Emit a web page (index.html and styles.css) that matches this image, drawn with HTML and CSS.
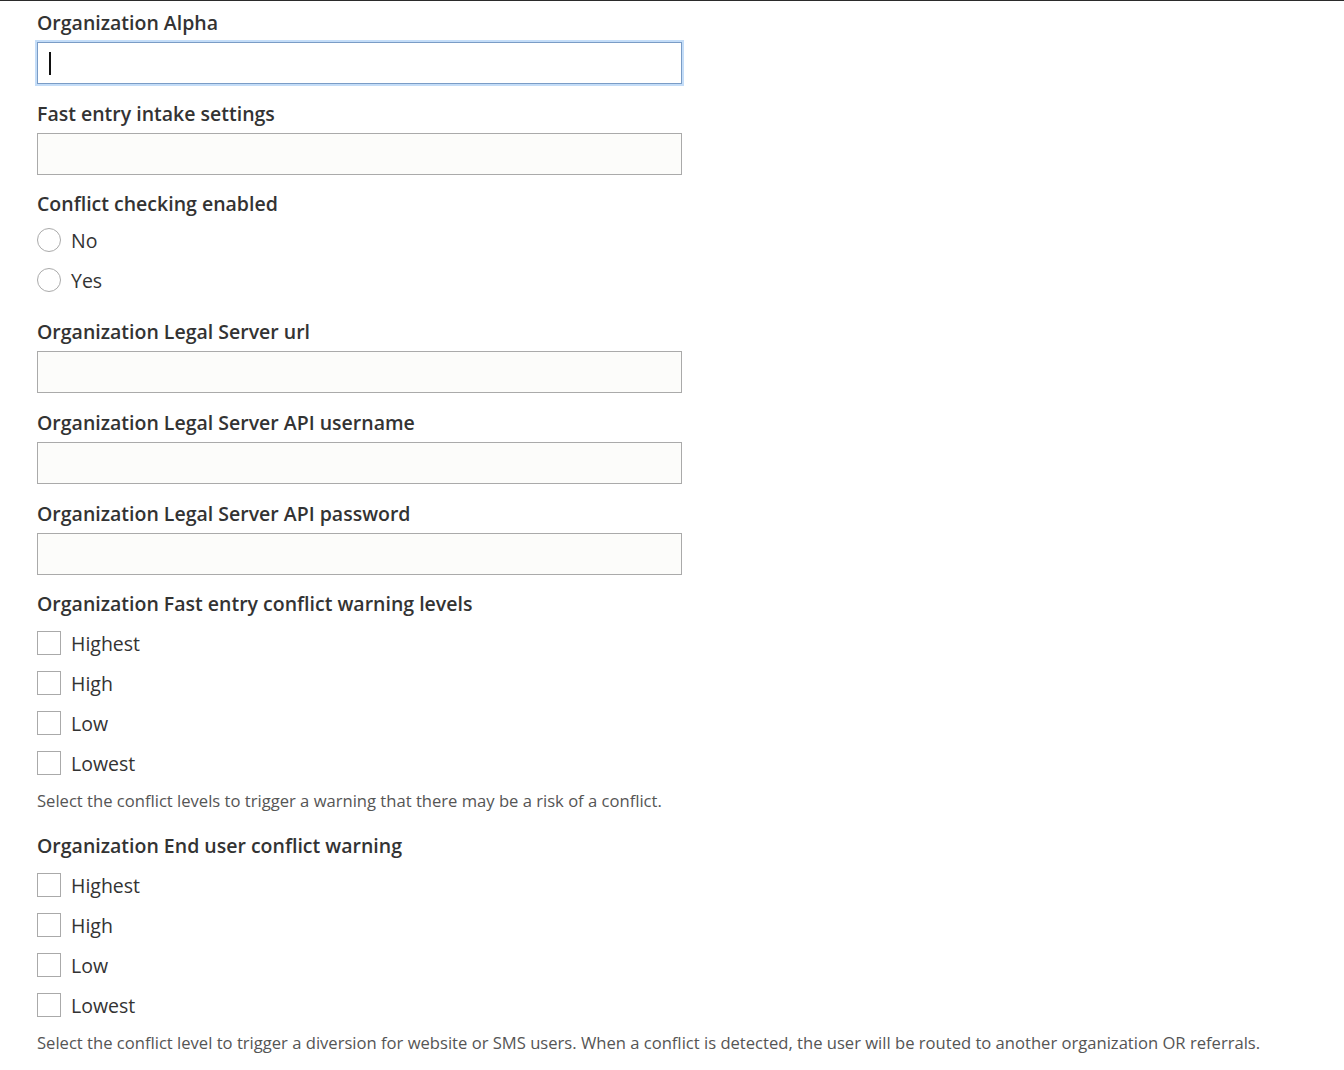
FILE: index.html
```html
<!DOCTYPE html>
<html lang="en">

<head>
    <meta charset="utf-8" />
    <title>Organization settings</title>
    <link rel="stylesheet" href="styles.css">
</head>

<body>
    <form class="settings">
        <div class="field">
            <label class="field-label" for="alpha">Organization Alpha</label>
            <div class="input-wrap">
                <input id="alpha" class="text-input focused" type="text">
                <span class="caret"></span>
            </div>
        </div>

        <div class="field">
            <label class="field-label" for="fastentry">Fast entry intake settings</label>
            <input id="fastentry" class="text-input" type="text">
        </div>

        <div class="field field-radios">
            <div class="field-label">Conflict checking enabled</div>
            <label class="option"><span class="radio"></span>No</label>
            <label class="option"><span class="radio"></span>Yes</label>
        </div>

        <div class="field">
            <label class="field-label" for="lsurl">Organization Legal Server url</label>
            <input id="lsurl" class="text-input" type="text">
        </div>

        <div class="field">
            <label class="field-label" for="lsuser">Organization Legal Server API username</label>
            <input id="lsuser" class="text-input" type="text">
        </div>

        <div class="field">
            <label class="field-label" for="lspass">Organization Legal Server API password</label>
            <input id="lspass" class="text-input" type="text">
        </div>

        <div class="field field-checks">
            <div class="field-label">Organization Fast entry conflict warning levels</div>
            <label class="option"><span class="box"></span>Highest</label>
            <label class="option"><span class="box"></span>High</label>
            <label class="option"><span class="box"></span>Low</label>
            <label class="option"><span class="box"></span>Lowest</label>
            <p class="help">Select the conflict levels to trigger a warning that there may be a risk of a conflict.</p>
        </div>

        <div class="field field-checks">
            <div class="field-label">Organization End user conflict warning</div>
            <label class="option"><span class="box"></span>Highest</label>
            <label class="option"><span class="box"></span>High</label>
            <label class="option"><span class="box"></span>Low</label>
            <label class="option"><span class="box"></span>Lowest</label>
            <p class="help">Select the conflict level to trigger a diversion for website or SMS users. When a conflict is detected, the user will be routed to another organization OR referrals.</p>
        </div>
    </form>
</body>

</html>
```

FILE: styles.css
```css
* {
    box-sizing: border-box;
}

body {
    margin: 0;
    border-top: 1px solid #2b2b2b;
    background: #fff;
    font-family: "Open Sans", "Noto Sans", sans-serif;
    color: #333;
}

.settings {
    padding: 1px 0 0 37px;
}

.field {
    margin-bottom: 18.7px;
}

.field-label {
    display: block;
    font-size: 19.5px;
    font-weight: 600;
    line-height: 22px;
    color: #333;
    margin: 10px 0 8px;
}

.field + .field .field-label {
    margin-top: 0;
}

.input-wrap {
    position: relative;
    width: 645px;
}

.caret {
    position: absolute;
    left: 12px;
    top: 10px;
    width: 2px;
    height: 23px;
    background: #111;
}

.text-input {
    display: block;
    width: 645px;
    height: 42px;
    border: 1px solid #aaa;
    background: #fcfcfa;
    font-family: inherit;
    font-size: 16px;
    padding: 0 10px;
    outline: 0;
}

.text-input.focused {
    border-color: #7a9cc6;
    background: #fff;
    box-shadow: 0 0 0 2px #c4ddf8;
}

.option {
    display: flex;
    align-items: center;
    gap: 10px;
    height: 40px;
    font-size: 19.5px;
    color: #333;
}

.field-radios .field-label {
    margin-bottom: 5px;
}

.field-radios {
    margin-bottom: 21px;
}

.radio {
    width: 24px;
    height: 24px;
    border: 1px solid #aaa;
    border-radius: 50%;
    background: #fff;
}

.box {
    width: 24px;
    height: 24px;
    border: 1px solid #aaa;
    background: #fff;
}

.help {
    margin: 7px 0 0;
    font-size: 16.6px;
    line-height: 22px;
    color: #555;
}

.field-checks {
    margin-bottom: 23px;
}
```
